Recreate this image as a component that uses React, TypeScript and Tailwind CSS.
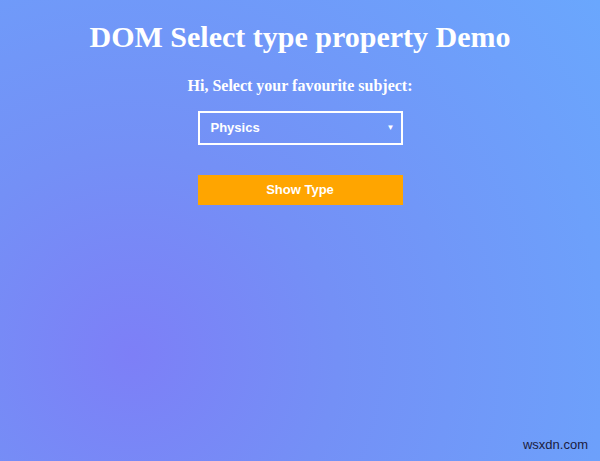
export default function App() {
  return (
    <div
      className="relative w-[600px] h-[461px] overflow-hidden bg-[radial-gradient(circle_at_22%_77%,#7d7ff7_0%,#7490f6_35%,#6aa7fd_100%)] font-['Liberation_Serif',serif] text-white"
    >
      <div className="flex flex-col items-center pt-[19px]">
        <h1 className="text-[30px] leading-[36px] font-bold">DOM Select type property Demo</h1>
        <p className="mt-[21px] text-[16px] leading-[20px] font-bold">Hi, Select your favourite subject:</p>
        <div className="mt-[15px] flex w-[205px] h-[34px] items-center justify-between border-2 border-white pl-[11px] pr-[6px] font-['Liberation_Sans',sans-serif] text-[13px] font-bold">
          <span>Physics</span>
          <span className="text-[8px]">▼</span>
        </div>
        <button className="mt-[30px] w-[205px] h-[30px] bg-[#ffa500] font-['Liberation_Sans',sans-serif] text-[13px] font-bold text-white">
          Show Type
        </button>
      </div>
      <span className="absolute right-[12px] top-[435px] font-['Liberation_Sans',sans-serif] text-[13px] text-[#1b2040]">
        wsxdn.com
      </span>
    </div>
  );
}
